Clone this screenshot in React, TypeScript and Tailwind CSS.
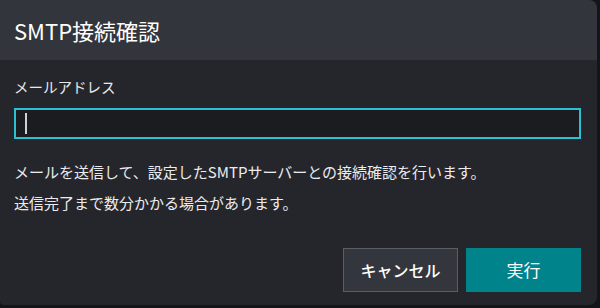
import React from 'react';

const font = { fontFamily: '"Noto Sans CJK JP", "Noto Sans", sans-serif' };

const App: React.FC = () => (
  <div className="w-[600px] h-[308px] bg-[#141518] overflow-hidden" style={font}>
    <div className="w-[597px] h-[305px] bg-[#25262c] rounded-tr-lg rounded-br-lg rounded-bl-sm overflow-hidden flex flex-col">
      <div className="h-[60px] bg-[#33353c] flex items-center px-[14px] shrink-0">
        <h2 className="text-[22px] text-white leading-none">SMTP接続確認</h2>
      </div>
      <div className="flex-1 flex flex-col px-[14px] pt-[20px]">
        <label className="text-[14.5px] text-[#e8e8ea] leading-none">メールアドレス</label>
        <div className="mt-[13px] h-[31px] w-[567px] border-2 border-[#2cc0d2] bg-[#1b1c20] flex items-center pl-[9px]">
          <span className="w-[2px] h-[21px] bg-[#d0d0d4]" />
        </div>
        <div className="mt-[17px] text-[15px] text-[#ececee] leading-[31px]">
          <p>メールを送信して、設定したSMTPサーバーとの接続確認を行います。</p>
          <p>送信完了まで数分かかる場合があります。</p>
        </div>
        <div className="mt-auto mb-[13px] flex justify-end gap-[8px] pr-[2px]">
          <button className="w-[115px] h-[44px] bg-[#34363d] border border-[#5c5e65] text-white text-[16px] font-medium">キャンセル</button>
          <button className="w-[115px] h-[44px] bg-[#00838a] text-white text-[17px]">実行</button>
        </div>
      </div>
    </div>
  </div>
);

export default App;
